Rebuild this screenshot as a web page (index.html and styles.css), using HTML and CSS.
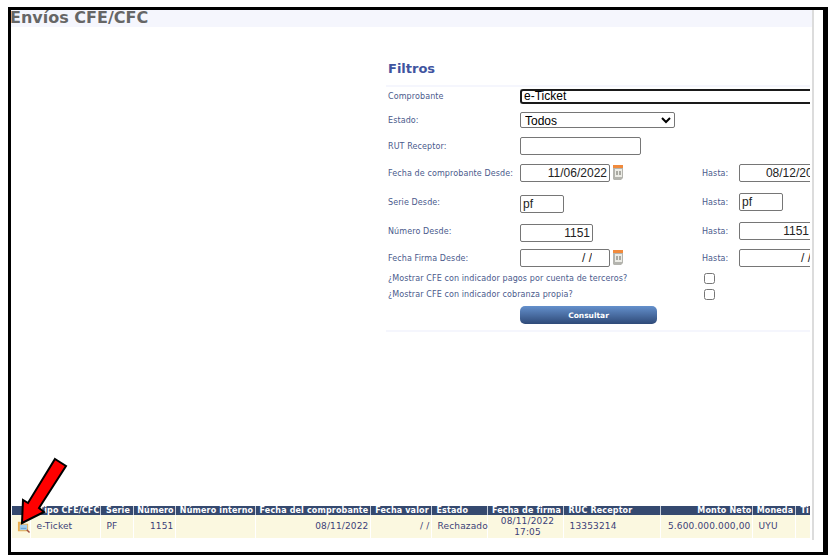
FILE: index.html
```html
<!DOCTYPE html>
<html lang="es">
<head>
    <meta charset="UTF-8">
    <title>Envíos CFE/CFC</title>
    <link rel="stylesheet" href="styles.css">
</head>
<body>
    <div class="frame">
        <div class="content">
            <h1 class="page-title">Envíos CFE/CFC</h1>

            <div class="filters">
                <h2 class="filters-title">Filtros</h2>

                <div class="row row-comprobante">
                    <label>Comprobante</label>
                    <div class="combo">e-Ticket</div>
                </div>
                <div class="row row-estado">
                    <label>Estado:</label>
                    <select class="select"><option>Todos</option></select>
                </div>
                <div class="row row-rut">
                    <label>RUT Receptor:</label>
                    <input class="input input-rut" type="text">
                </div>
                <div class="row row-29">
                    <label>Fecha de comprobante Desde:</label>
                    <div class="date-field">
                        <input class="input input-date" type="text" value="11/06/2022">
                        <svg class="cal" viewBox="0 0 12 17"><path d="M1 3h10v11l-2 2H2l-1-1z" fill="#b4b4ae"/><rect x="1" y="1" width="10" height="3" fill="#f08a3c"/><rect x="3" y="5" width="7" height="8" fill="#ecece6"/><path d="M5 7v4M8 7v4" stroke="#66665f"/></svg>
                    </div>
                    <label>Hasta:</label>
                    <input class="input input-date" type="text" value="08/12/2022">
                </div>
                <div class="row row-29">
                    <label>Serie Desde:</label>
                    <div><input class="input input-serie" type="text" value="pf"></div>
                    <label>Hasta:</label>
                    <input class="input input-serie" type="text" value="pf">
                </div>
                <div class="row row-numero">
                    <label>Número Desde:</label>
                    <div><input class="input input-num" type="text" value="1151"></div>
                    <label>Hasta:</label>
                    <input class="input input-num" type="text" value="1151">
                </div>
                <div class="row row-firma">
                    <label>Fecha Firma Desde:</label>
                    <div class="date-field">
                        <input class="input input-date input-firma" type="text" value="/ /">
                        <svg class="cal" viewBox="0 0 12 17"><path d="M1 3h10v11l-2 2H2l-1-1z" fill="#b4b4ae"/><rect x="1" y="1" width="10" height="3" fill="#f08a3c"/><rect x="3" y="5" width="7" height="8" fill="#ecece6"/><path d="M5 7v4M8 7v4" stroke="#66665f"/></svg>
                    </div>
                    <label>Hasta:</label>
                    <input class="input input-date input-firma" type="text" value="/ /">
                </div>
                <div class="check-row">
                    <label>¿Mostrar CFE con indicador pagos por cuenta de terceros?</label>
                    <input class="check" type="checkbox">
                </div>
                <div class="check-row">
                    <label>¿Mostrar CFE con indicador cobranza propia?</label>
                    <input class="check" type="checkbox">
                </div>
                <button class="button">Consultar</button>
            </div>

            <div class="results">
                <table class="grid">
                    <colgroup>
                        <col class="c-icon"><col class="c-tipo"><col class="c-serie"><col class="c-numero">
                        <col class="c-interno"><col class="c-fecha"><col class="c-valor"><col class="c-estado">
                        <col class="c-firma"><col class="c-ruc"><col class="c-monto"><col class="c-moneda"><col class="c-ti">
                    </colgroup>
                    <thead>
                        <tr>
                            <th colspan="2" class="right">Tipo CFE/CFC</th>
                            <th>Serie</th>
                            <th>Número</th>
                            <th>Número interno</th>
                            <th>Fecha del comprobante</th>
                            <th>Fecha valor</th>
                            <th class="left">Estado</th>
                            <th>Fecha de firma</th>
                            <th class="left">RUC Receptor</th>
                            <th class="right">Monto Neto</th>
                            <th>Moneda</th>
                            <th class="left">Ti</th>
                        </tr>
                    </thead>
                    <tbody>
                        <tr>
                            <td class="icon-cell">
                                <svg class="folder" viewBox="0 0 14 14"><path d="M1 2h5l1 2h5v8H1z" fill="#eeb04e"/><rect x="3" y="5" width="8" height="6" fill="#9fcdec"/><path d="M4 9h6" stroke="#5c9ad0"/><path d="M10.500 10.500l3 3" stroke="#a04a3a" stroke-width="1.500"/></svg>
                            </td>
                            <td>e-Ticket</td>
                            <td>PF</td>
                            <td class="right">1151</td>
                            <td></td>
                            <td class="right">08/11/2022</td>
                            <td class="right">/ /</td>
                            <td>Rechazado</td>
                            <td class="center">08/11/2022<br>17:05</td>
                            <td>13353214</td>
                            <td class="right">5.600.000.000,00</td>
                            <td>UYU</td>
                            <td></td>
                        </tr>
                    </tbody>
                </table>
            </div>
        </div>

        <svg class="arrow" viewBox="0 0 60 72"><path d="M44 2L55 9L28 51L33 55L11 66L12 43L17 46Z" fill="#f00" stroke="#000" stroke-width="2"/></svg>
    </div>
</body>
</html>
```

FILE: styles.css
```css
html, body {
    margin: 0;
    background: white;
}
.frame {
    position: relative;
    box-sizing: border-box;
    width: 820px;
    height: 548px;
    margin: 7px 0 0 8px;
    border: solid black;
    border-width: 3px 5px 3px 3px;
    font-family: "DejaVu Sans", sans-serif;
}
.content {
    box-sizing: border-box;
    display: flex;
    flex-direction: column;
    width: 803px;
    height: 530px;
    border-right: 2px solid #dcdcdc;
}
.page-title {
    margin: 0;
    height: 17px;
    background: #f5f6fd;
    color: #666;
    font-size: 16px;
    line-height: 16px;
    font-weight: bold;
    text-indent: -1px;
}
.filters {
    width: 424px;
    margin-left: 375px;
    padding-bottom: 6px;
    border-bottom: 2px solid #f5f6fd;
}
.filters-title {
    margin: 0 0 0 2px;
    padding: 33px 0 7px;
    height: 18px;
    color: #3f55a0;
    font-size: 13px;
    line-height: 18px;
}
.row {
    display: grid;
    grid-template-columns: 134px 180px 39px 90px;
    align-items: start;
    overflow: hidden;
}
.row label, .check-row label {
    padding-left: 2px;
    color: #4a5a8c;
    font-size: 8px;
    letter-spacing: .1px;
    line-height: 20px;
    white-space: nowrap;
}
.row-comprobante {
    box-sizing: border-box;
    height: 27px;
    padding-top: 2px;
    border-top: 2px solid #f5f6fd;
}
.row-comprobante label {
    line-height: 15px;
}
.row-estado {
    height: 25px;
}
.row-estado label {
    line-height: 17px;
}
.row-rut {
    height: 27px;
}
.row-29 {
    height: 29px;
}
.row-numero {
    height: 27px;
}
.row-firma {
    height: 24px;
}
.combo {
    box-sizing: border-box;
    grid-column: 2 / 5;
    height: 15px;
    padding-left: 2px;
    border: 2px solid #1a1a1a;
    border-right: none;
    border-radius: 3px 0 0 3px;
    font: 12px/11px "Liberation Sans", sans-serif;
}
.select {
    box-sizing: border-box;
    width: 155px;
    height: 16px;
    padding: 0 0 2px;
    border: 1px solid #767676;
    border-radius: 2px;
    background: white;
    font: 12px "Liberation Sans", sans-serif;
}
.input {
    box-sizing: border-box;
    height: 18px;
    padding: 0 2px;
    border: 1px solid #767676;
    border-radius: 2px;
    background: white;
    color: #222;
    font: 12px "Liberation Sans", sans-serif;
}
.input-rut {
    grid-column: 2 / 4;
    width: 121px;
}
.input-date {
    width: 90px;
    text-align: right;
}
.input-firma {
    padding-right: 17px;
}
.input-serie {
    width: 44px;
}
.input-num {
    width: 73px;
    text-align: right;
}
.date-field {
    display: flex;
    gap: 2px;
}
.cal {
    width: 12px;
    height: 17px;
}
.check-row {
    display: grid;
    grid-template-columns: 318px 12px;
    height: 16px;
    align-items: start;
}
.check-row label {
    line-height: 11px;
}
.check {
    width: 11px;
    height: 11px;
    margin: 0;
}
.button {
    display: block;
    width: 137px;
    height: 18px;
    margin: 1px 0 0 134px;
    padding: 0;
    border: none;
    border-radius: 5px;
    background: linear-gradient(#6490cc, #2f4a78);
    color: white;
    font: bold 7.5px "DejaVu Sans", sans-serif;
}
.results {
    margin: auto 0 2px 1px;
    width: 798px;
    overflow: hidden;
}
.grid {
    width: 798px;
    table-layout: fixed;
    border-collapse: collapse;
}
.c-icon { width: 18px; }
.c-tipo { width: 70px; }
.c-serie { width: 33px; }
.c-numero { width: 42px; }
.c-interno { width: 80px; }
.c-fecha { width: 115px; }
.c-valor { width: 61px; }
.c-estado { width: 56px; }
.c-firma { width: 76px; }
.c-ruc { width: 97px; }
.c-monto { width: 92px; }
.c-moneda { width: 43px; }
.c-ti { width: 15px; }
.grid th {
    height: 9px;
    padding: 0 0 0 3px;
    border-right: 1px solid #c8d0dc;
    background: #35496f;
    color: white;
    font-size: 8px;
    letter-spacing: .15px;
    line-height: 9px;
    text-align: center;
    white-space: nowrap;
}
.grid th.left {
    padding-left: 5px;
    text-align: left;
}
.grid td {
    height: 22px;
    padding: 0 1px;
    border-right: 1px solid white;
    background: #fbf8e0;
    color: #3b3f78;
    font-size: 9px;
    letter-spacing: .15px;
    line-height: 11px;
    white-space: nowrap;
}
.grid td:nth-child(2), .grid td:nth-child(3), .grid td:nth-child(8), .grid td:nth-child(10), .grid td:nth-child(12) {
    padding-left: 6px;
}
.grid .right {
    text-align: right;
}
.grid .center {
    padding: 1px 0 0 5px;
    text-align: center;
}
.grid .icon-cell {
    padding: 0 0 0 5px;
}
.folder {
    display: block;
    width: 13px;
    height: 13px;
}
.arrow {
    position: absolute;
    left: 0;
    top: 447px;
    width: 60px;
    height: 72px;
}
```
